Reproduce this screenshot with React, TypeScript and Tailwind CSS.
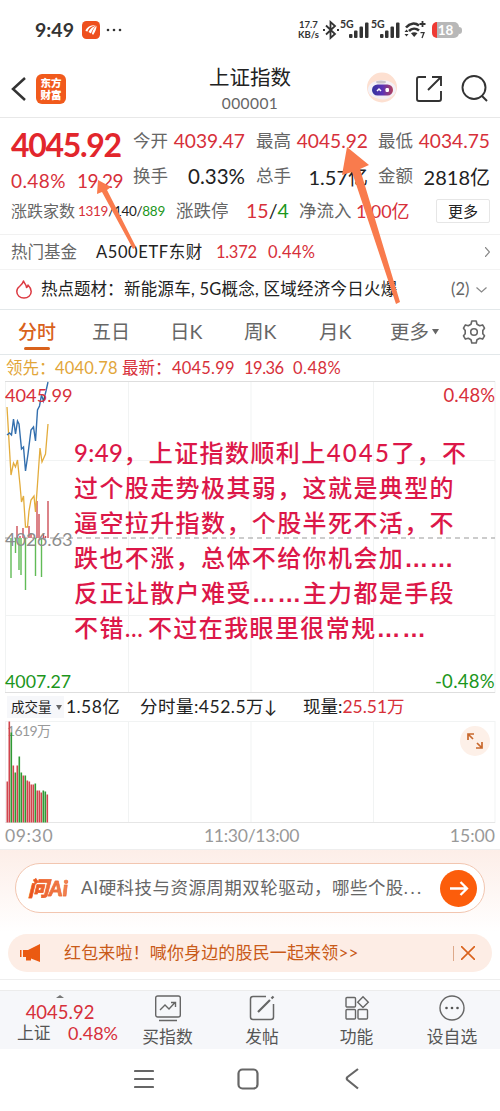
import type { ReactNode } from "react";

const FONT = "font-[Lato,'Noto_Sans_CJK_SC',sans-serif]";

type QuoteProps = {
  label: string;
  value: ReactNode;
  className?: string;
};

const Quote = ({ label, value, className = "text-[20px]" }: QuoteProps) => (
  <div className={`flex shrink-0 items-center justify-between ${className}`}>
    <span className="text-[17.5px] text-[#666]">{label}</span>
    <span>{value}</span>
  </div>
);

const StatusBar = () => (
  <div className="flex h-[60px] items-center pl-[35px] text-[#333]">
    <span className="w-[47px] text-[19.5px] font-bold">9:49</span>
    <svg width="18" height="18" viewBox="0 0 18 18">
      <rect width="18" height="18" rx="4.5" fill="#ee4f1d" />
      <path d="M3.500 10C4 6.500 9 3.500 14 4C9 5.500 6.500 7 5.500 10.500Z" fill="#fff" />
      <path d="M6.500 11C8 7.500 11 5.500 14.500 4.500C11.500 7 10 9 9 12.500Z" fill="#fff" />
      <path d="M10 12.500C11 8.500 12.500 6.500 14.700 5C14 9 13 11.500 11 14Z" fill="#fff" />
    </svg>
    <svg width="16" height="4" viewBox="0 0 16 4" className="ml-[6px]" fill="#333">
      <circle cx="2" cy="2" r="1.3" />
      <circle cx="8" cy="2" r="1.3" />
      <circle cx="14" cy="2" r="1.3" />
    </svg>
    <div className="ml-[175px] flex w-[23px] flex-col items-center text-[9.5px] leading-[10.5px] font-bold whitespace-nowrap">
      <span>17.7</span>
      <span>KB/s</span>
    </div>
    <svg width="18" height="20" viewBox="0 0 18 20" className="ml-[2px]" fill="none" stroke="#333" strokeWidth="1.8">
      <path d="M4 5.5L13 14L8.5 18V2L13 6L4 14.5" />
      <path d="M1 10H3M15 10H17" strokeWidth="2.2" />
    </svg>
    <Signal />
    <Signal />
    <svg width="24" height="20" viewBox="0 0 24 20" className="ml-[1px]" fill="none" stroke="#333" strokeWidth="2.6">
      <path d="M3 7.5C7 3 12 2.5 16 5.5" />
      <path d="M6 11C9 8 13 8 16 10.5" />
      <path d="M8 13.2C10 11.8 12.5 11.8 14.5 13.2L11.2 17Z" fill="#333" stroke="none" />
      <path d="M19.5 1V7M16.5 4H22.5" strokeWidth="1.8" />
      <path d="M1.5 12L3.5 9.5L5.5 12ZM1.5 14L3.5 16.5L5.5 14Z" fill="#333" stroke="none" />
      <path d="M17.5 12.7H21L19 18" strokeWidth="1.3" />
    </svg>
    <div className="ml-[5px] flex h-[16px] w-[27px] items-center justify-center rounded-[5px] bg-[linear-gradient(90deg,#ee3a34_0,#ee3a34_5px,#b8b8b8_5px)] text-[13.5px] font-bold text-white">
      18
    </div>
    <div className="h-[7px] w-[3px] rounded-r-full bg-[#b8b8b8]" />
  </div>
);

const Signal = () => (
  <div className="relative h-[20px] w-[31px]">
    <span className="absolute -top-px left-0 text-[10.5px] leading-[10px] font-bold">5G</span>
    <svg width="31" height="20" viewBox="0 0 31 20" fill="#333">
      <rect x="9" y="14" width="3.5" height="4" rx="1" />
      <rect x="14" y="10.5" width="3.5" height="7.5" rx="1" />
      <rect x="19.5" y="6.5" width="3.5" height="11.5" rx="1" />
      <rect x="25" y="2.5" width="3.5" height="15.5" rx="1" />
    </svg>
  </div>
);

const Header = () => (
  <header className="flex h-[58px] items-center border-b border-[#e8e8e8] pl-[11px]">
    <svg width="16" height="24" viewBox="0 0 16 24" fill="none" stroke="#333" strokeWidth="2.5">
      <path d="M14 1L2 12L14 23" />
    </svg>
    <div className="ml-[9px] flex h-[30px] w-[30px] flex-col items-center justify-center rounded-[6px] bg-[#f15a1c] text-[10.5px] leading-[12px] font-black text-white">
      <span>东方</span>
      <span>财富</span>
    </div>
    <div className="ml-[128px] flex w-[112px] flex-col items-center">
      <h1 className="text-[20.5px] leading-[27px] text-[#222]">上证指数</h1>
      <span className="mt-[1px] text-[15.5px] leading-[22px] tracking-[0.4px] text-[#666]">000001</span>
    </div>
    <svg width="34" height="34" viewBox="0 0 34 34" className="ml-[60px]">
      <defs>
        <linearGradient id="visor" x1="0" x2="1">
          <stop offset="0" stopColor="#33339c" />
          <stop offset=".5" stopColor="#5b33b5" />
          <stop offset="1" stopColor="#b3405d" />
        </linearGradient>
      </defs>
      <circle cx="16" cy="15.5" r="15" fill="#fde0d1" />
      <ellipse cx="16" cy="17.5" rx="14" ry="9.5" fill="#f3f1f7" />
      <ellipse cx="15" cy="10" rx="5" ry="1.5" fill="#c9c4cb" />
      <path d="M7 23Q17 32 27 23Z" fill="#f3edf2" />
      <rect x="6" y="12.5" width="21" height="11" rx="5.5" fill="url(#visor)" />
      <path d="M11 19L13 17L15 19" fill="none" stroke="#fff" strokeWidth="1.5" />
      <rect x="19.5" y="16" width="3.5" height="4" rx="1.2" fill="#fff" />
    </svg>
    <svg width="26" height="26" viewBox="0 0 26 26" className="ml-[16px]" fill="none" stroke="#333" strokeWidth="1.9">
      <path d="M10 1H3Q1 1 1 3V23Q1 25 3 25H23Q25 25 25 23V15" />
      <path d="M16 1H25V10M25 1L12 14" />
    </svg>
    <svg width="27" height="27" viewBox="0 0 27 27" className="ml-[19px]" fill="none" stroke="#333" strokeWidth="1.9">
      <circle cx="13" cy="12.5" r="11.5" />
      <path d="M20.5 20.5L26 26" />
    </svg>
  </header>
);

const Summary = () => (
  <section className="h-[117px] border-b border-[#f1f1f1] pt-[5px] pl-[11px] whitespace-nowrap text-[#222]">
    <div className="flex h-[36px] items-center">
      <span className="mt-[8px] w-[122px] shrink-0 text-[32px] leading-[36px] font-bold tracking-[-1.3px] text-[#e2262c]">
        4045.92
      </span>
      <Quote label="今开" value="4039.47" className="w-[112px] text-[19.2px] text-[#d7303a]" />
      <Quote label="最高" value="4045.92" className="ml-[11px] w-[112px] text-[19.2px] text-[#d7303a]" />
      <Quote label="最低" value="4034.75" className="ml-[10px] w-[112px] text-[19.2px] text-[#d7303a]" />
    </div>
    <div className="flex h-[35px] items-center">
      <div className="mt-[10px] flex w-[112px] shrink-0 justify-between text-[19px] text-[#d7303a]">
        <span className="tracking-[0.4px]">0.48%</span>
        <span className="tracking-[-0.5px]">19.29</span>
      </div>
      <Quote label="换手" value="0.33%" className="ml-[10px] w-[112px] text-[20.5px]" />
      <Quote label="总手" value="1.57亿" className="ml-[11px] w-[112px] text-[20px]" />
      <Quote label="金额" value="2818亿" className="ml-[10px] w-[112px] text-[20px]" />
    </div>
    <div className="flex h-[34px] items-center">
      <span className="w-[67px] text-[16px] text-[#666]">涨跌家数</span>
      <span className="w-[98px] text-[13.5px] tracking-[-0.3px]">
        <span className="text-[#d7303a]">1319</span>/140/<span className="text-[#1c961c]">889</span>
      </span>
      <span className="w-[70px] text-[17.5px] text-[#666]">涨跌停</span>
      <span className="w-[53px] text-[19.5px]">
        <span className="text-[#d7303a]">15</span>/<span className="text-[#1c961c]">4</span>
      </span>
      <span className="w-[57px] text-[17.5px] text-[#666]">净流入</span>
      <span className="w-[80px] text-[18px] text-[#d7303a]">1.00亿</span>
      <button className="h-[24px] w-[54px] rounded-[2px] border border-[#e6e6e6] text-[15px]">更多</button>
    </div>
  </section>
);

const Tabs = () => (
  <nav className="flex h-[45px] items-center border-b border-[#e3e8ea] pl-[18px] text-[19.5px] whitespace-nowrap text-[#666]">
    <span className="relative w-[74px] text-[19px] font-medium text-[#d9621c]">
      分时
      <i className="absolute -bottom-[4px] left-[6px] h-[3px] w-[26px] rounded-full bg-[#d9621c]" />
    </span>
    <span className="w-[78px] text-[19px]">五日</span>
    <span className="w-[74px]">日K</span>
    <span className="w-[75px]">周K</span>
    <span className="w-[71px]">月K</span>
    <span className="w-[42px]">更多</span>
    <svg width="7" height="6" viewBox="0 0 7 6" fill="#666">
      <path d="M0 0H7L3.5 5.5Z" />
    </svg>
    <svg width="24" height="24" viewBox="0 0 24 24" className="ml-[23px]" fill="none" stroke="#666" strokeWidth="1.6" strokeLinejoin="round">
      <path d="M9.8 1H14.2L15 4.3L17.7 5.8L20.6 4.9L22.5 8.2L20.8 10.5V13.8L22.5 15.8L20.6 19.1L17.7 18.2L15 19.7L14.2 23H9.8L9 19.7L6.3 18.2L3.4 19.1L1.5 15.8L3.2 13.8V10.5L1.5 8.2L3.4 4.9L6.3 5.8L9 4.3Z" />
      <circle cx="12" cy="12" r="3.3" />
    </svg>
  </nav>
);

const UP = [
  [17, 145], [20, 155], [23, 147], [29, 145], [31, 152], [37, 120],
  [39, 133], [43.5, 152], [45.5, 155], [48, 120],
];
const DOWN = [
  [11, 197], [15.5, 172], [19, 189], [21, 194], [25.5, 209], [35.5, 195], [41.5, 196],
];

const PriceChart = () => (
  <div className="relative h-[312px]">
    <svg width="500" height="312" viewBox="0 0 500 312" fill="none">
      <path d="M5.5 0V312M128.5 0V312M251 0V312M373.5 0V312M495 0V312M5 79.5H495M5 234.5H495" stroke="#f1f3f3" />
      <path d="M5 .5H495M5 311.5H495" stroke="#dedede" />
      <path d="M5 157H495" stroke="#999" strokeDasharray="5 4" />
      {UP.map(([x, y]) => (
        <path key={x} d={`M${x} ${y}V157`} stroke="#cd4f57" strokeWidth="1.4" />
      ))}
      {DOWN.map(([x, y]) => (
        <path key={x} d={`M${x} 157V${y}`} stroke="#61bb56" strokeWidth="1.4" />
      ))}
      <path
        d="M7 26L11 94L13.5 82L15.5 86L17.5 79L20 104L21.5 121L23.5 115L25.5 146H27.5L29 130L31 119L34 115L35.5 131L37.5 103L40 67L42 81L45.5 73L48 43"
        stroke="#e3ac3c"
        strokeWidth="1.3"
      />
      <path
        d="M7 54L9.5 52L11.5 54L13.5 38L15.5 53L17.5 40L19 43L21.5 68L23.5 66L25.5 90L28 73L31 49L33.5 46L35.5 60L37.5 29L39.5 25L41.5 14L43.5 20L46 10L48 1"
        stroke="#336fae"
        strokeWidth="1.4"
      />
    </svg>
    <span className="absolute top-[2px] left-[5px] text-[18.2px] leading-[24px] text-[#d7303a]">4045.99</span>
    <span className="absolute top-[2px] right-[5px] text-[18.5px] leading-[24px] text-[#d7303a]">0.48%</span>
    <span className="absolute top-[146px] left-[5px] text-[18.2px] leading-[24px] text-[#8d8d8d]">4026.63</span>
    <span className="absolute bottom-0 left-[5px] text-[17.8px] leading-[24px] text-[#1c961c]">4007.27</span>
    <span className="absolute right-[5px] bottom-0 text-[18.5px] leading-[24px] tracking-[0.3px] text-[#1c961c]">-0.48%</span>
    <p className="absolute top-[54px] left-[74px] text-[24px] leading-[35px] font-medium tracking-[1.4px] whitespace-nowrap text-[#dc1748]">
      <span className="tracking-[0.4px]">9:49</span>，上证指数顺利上<span className="tracking-[2.2px]">4045</span>了，不
      <br />
      过个股走势极其弱，这就是典型的
      <br />
      逼空拉升指数，个股半死不活，不
      <br />
      跌也不涨，总体不给你机会加<Ellipsis />
      <br />
      反正让散户难受<Ellipsis />主力都是手段
      <br />
      不错<span className="tracking-[5px]">…</span>不过在我眼里很常规<Ellipsis />
    </p>
  </div>
);

const Ellipsis = () => (
  <span className="font-['Liberation_Sans',sans-serif] leading-none font-bold">……</span>
);

const VOLUMES: [number, boolean][] = [
  [41, true], [101, true], [90, false], [57, true], [50, false], [57, true], [66, false],
  [50, false], [47, true], [47, false], [42, true], [41, true], [38, true], [38, true],
  [39, false], [32, true], [32, true], [30, true], [32, false], [31, false], [28, true],
];

const VolumeChart = () => (
  <div className="relative h-[102px]">
    <span className="absolute top-[1px] left-[7px] text-[14px] leading-[18px] tracking-[-0.6px] text-[#999]">1619万</span>
    <svg width="500" height="102" viewBox="0 0 500 102" fill="none" className="relative">
      <path d="M5.5 0V102M128.5 0V102M251 0V102M373.5 0V102M495 0V102M5 .5H495" stroke="#f1f3f3" />
      <path d="M5 101.5H495" stroke="#e6e6e6" />
      {VOLUMES.map(([h, up], i) => (
        <rect key={i} x={6.5 + i * 2} y={101.5 - h} width="1.6" height={h} fill={up ? "#d0454d" : "#2f9a35"} />
      ))}
    </svg>
    <svg width="30" height="30" viewBox="0 0 30 30" className="absolute top-[5px] right-[10px]" fill="none" stroke="#c8682c" strokeWidth="1.7">
      <circle cx="15" cy="15" r="15" fill="#fdf0e8" stroke="none" />
      <path d="M8 14V8H14M8 8L13 13M22 16V22H16M22 22L17 17" />
    </svg>
  </div>
);

const Banner = () => (
  <section className="h-[131px] border-y border-[#eee] bg-[linear-gradient(180deg,#fdeee8_0,#fff_82px)] pt-[13px]">
    <div className="ml-[15px] flex h-[50px] w-[470px] items-center rounded-full border border-[#f2c6b0] bg-white pl-[12px]">
      <span className="w-[53px] bg-linear-to-r from-[#ea4f13] to-[#f29665] bg-clip-text text-[20.5px] font-black tracking-[0.4px] text-transparent italic [-webkit-text-stroke:0.5px_#ee6428]">
        问Ai
      </span>
      <span className="w-[359px] text-[17.5px] tracking-[0.45px] whitespace-nowrap text-[#666]">
        AI硬科技与资源周期双轮驱动，哪些个股<span className="tracking-[2.5px]">...</span>
      </span>
      <svg width="37" height="37" viewBox="0 0 37 37" fill="none" stroke="#fff" strokeWidth="2.3">
        <circle cx="18.5" cy="18.5" r="18.5" fill="#fc5d0b" stroke="none" />
        <path d="M10 18.5H27M20.5 12L27 18.5L20.5 25" />
      </svg>
    </div>
    <div className="mt-[21px] ml-[8px] flex h-[38px] w-[484px] items-center rounded-full bg-[#fdede5] pl-[12px]">
      <svg width="21" height="18" viewBox="0 0 21 18" fill="#ea5a12">
        <path d="M0 6H1.5V13H0ZM3 6H8L20 0V18L11 14.5V16.5H6V13H3Z" />
      </svg>
      <span className="ml-[23px] w-[389px] text-[17px] tracking-[0.15px] text-[#c95a18]">
        红包来啦！喊你身边的股民一起来领&gt;&gt;
      </span>
      <i className="h-[15px] w-px bg-[#dda98a]" />
      <svg width="14" height="14" viewBox="0 0 14 14" className="ml-[7px]" stroke="#d9621c" strokeWidth="1.6">
        <path d="M0 0L14 14M14 0L0 14" />
      </svg>
    </div>
  </section>
);

const BottomBar = () => (
  <nav className="mt-[10px] flex h-[59px] border-t border-[#ececec] bg-[#f6f7fa] text-[16.8px] whitespace-nowrap text-[#555]">
    <div className="flex w-[120px] flex-col items-center pt-[4px]">
      <svg width="8" height="3" viewBox="0 0 8 3" fill="#777">
        <path d="M0 3L4 0L8 3Z" />
      </svg>
      <span className="mt-[3px] text-[18.5px] leading-[22px] text-[#d7303a]">4045.92</span>
      <div className="flex h-[22px] w-full justify-between pr-[2px] pl-[17px] leading-[20px]">
        <span>上证</span>
        <span className="text-[18px] text-[#d7303a]">0.48%</span>
      </div>
    </div>
    <div className="flex w-[95px] flex-col items-center pt-[4px]">
      <svg width="26" height="28" viewBox="0 0 26 28" fill="none" stroke="#666" strokeWidth="1.4">
        <rect x=".7" y="1" width="24.6" height="21" rx="2" />
        <path d="M5 15L10 10L14 14L20 7.5M16 7.5H20.5V12M4 25.5H22" />
      </svg>
      <span className="mt-[3px] leading-[22px]">买指数</span>
    </div>
    <div className="flex w-[94px] flex-col items-center pt-[4px]">
      <svg width="26" height="28" viewBox="0 0 26 28" fill="none" stroke="#666" strokeWidth="1.5">
        <path d="M17 1.5H4Q1.5 1.5 1.5 4V22Q1.5 24.5 4 24.5H22Q24.5 24.5 24.5 22V9" />
        <path d="M9 17L21 5M22.5 3.5L24.5 1.5" strokeWidth="2.2" />
      </svg>
      <span className="mt-[3px] leading-[22px]">发帖</span>
    </div>
    <div className="flex w-[95px] flex-col items-center pt-[4px]">
      <svg width="26" height="28" viewBox="0 0 26 28" fill="none" stroke="#666" strokeWidth="1.4">
        <rect x="2" y="2.5" width="9.5" height="9.5" rx="1" />
        <rect x="2" y="14.5" width="9.5" height="9.5" rx="1" />
        <rect x="14" y="14.5" width="9.5" height="9.5" rx="1" />
        <path d="M19 1.8L24.3 7.2L19 12.5L13.7 7.2Z" />
      </svg>
      <span className="mt-[3px] leading-[22px]">功能</span>
    </div>
    <div className="flex w-[96px] flex-col items-center pt-[4px]">
      <svg width="26" height="28" viewBox="0 0 26 28" fill="none" stroke="#666" strokeWidth="1.4">
        <circle cx="13" cy="13" r="12" />
        <g fill="#555" stroke="none">
          <circle cx="7.5" cy="13" r="1.3" />
          <circle cx="13" cy="13" r="1.3" />
          <circle cx="18.5" cy="13" r="1.3" />
        </g>
      </svg>
      <span className="mt-[3px] leading-[22px]">设自选</span>
    </div>
  </nav>
);

const SystemNav = () => (
  <div className="flex h-[59px] items-center pl-[134px]">
    <svg width="20" height="20" viewBox="0 0 20 20" stroke="#666" strokeWidth="2.2" strokeLinecap="round">
      <path d="M1 2H19M1 10H19M1 18H19" />
    </svg>
    <svg width="22" height="22" viewBox="0 0 22 22" className="ml-[83px]" fill="none" stroke="#666" strokeWidth="2.2">
      <rect x="1.5" y="1.5" width="19" height="19" rx="4" />
    </svg>
    <svg width="14" height="22" viewBox="0 0 14 22" className="ml-[86px]" fill="none" stroke="#666" strokeWidth="2.2" strokeLinejoin="round">
      <path d="M13 1L2.5 9Q1 10.5 2.5 12L13 20.5" />
    </svg>
  </div>
);

export default function App() {
  return (
    <main className={`relative h-[1111px] w-[500px] overflow-hidden bg-white ${FONT}`}>
      <StatusBar />
      <Header />
      <Summary />

      <div className="flex h-[35px] items-center border-b border-[#f3f3f3] pl-[11px] text-[16.5px] whitespace-nowrap text-[#222]">
        <span className="w-[85px] text-[#666]">热门基金</span>
        <span className="w-[120px] tracking-[0.6px]">A500ETF东财</span>
        <span className="w-[52px] tracking-[-0.3px] text-[#d7303a]">1.372</span>
        <span className="w-[217px] tracking-[0.3px] text-[#d7303a]">0.44%</span>
        <svg width="5" height="10" viewBox="0 0 5 10" fill="none" stroke="#888" strokeWidth="1.2">
          <path d="M0 0L4.5 5L0 10" />
        </svg>
      </div>

      <div className="flex h-[40px] items-center border-b border-[#e3e8ea] pl-[16px] text-[16.5px] whitespace-nowrap text-[#222]">
        <svg width="16" height="19" viewBox="0 0 16 19" fill="none" stroke="#dc3a42" strokeWidth="1.5" strokeLinejoin="round">
          <path d="M7.5 1C8.5 4 10.5 4.5 10.5 7.5C11.5 7 12 6 12 5C14 7 15.2 9 15.2 11.5C15.2 15.5 12 18 8 18S.8 15.5 .8 11.5C.8 9 2 7.5 3.5 6.5C5.2 5.2 6.8 3.5 7.5 1Z" />
        </svg>
        <span className="ml-[9px] w-[83px]">热点题材：</span>
        <span className="w-[327px] tracking-[0.25px]">新能源车, 5G概念, 区域经济今日火爆</span>
        <span className="w-[25px] text-[#666]">(2)</span>
        <svg width="11" height="6" viewBox="0 0 11 6" fill="none" stroke="#888" strokeWidth="1.2">
          <path d="M.5 .5L5.5 5L10.5 .5" />
        </svg>
      </div>

      <Tabs />

      <div className="flex h-[26px] items-center pl-[6px] text-[16.5px] whitespace-nowrap text-[#d7303a]">
        <span className="w-[49px] text-[#e2a63a]">领先：</span>
        <span className="w-[67px] tracking-[0.2px] text-[#e2a63a]">4040.78</span>
        <span className="w-[50px]">最新：</span>
        <span className="w-[72px] tracking-[0.2px]">4045.99</span>
        <span className="w-[49px] tracking-[-0.5px]">19.36</span>
        <span className="tracking-[0.5px]">0.48%</span>
      </div>

      <PriceChart />

      <div className="flex h-[28px] items-center pl-[7px] text-[17.5px] whitespace-nowrap text-[#222]">
        <div className="flex h-[22px] w-[57px] items-center bg-[#f6f7fa] pl-[4px] text-[13.5px]">
          成交量
          <svg width="6" height="5" viewBox="0 0 6 5" fill="#666" className="ml-[4px]">
            <path d="M0 0H6L3 5Z" />
          </svg>
        </div>
        <span className="ml-[2px] w-[74px] tracking-[0.4px]">1.58亿</span>
        <span className="w-[163px] tracking-[0.5px]">分时量:452.5万↓</span>
        <span>
          现量:<span className="text-[#d7303a]">25.51万</span>
        </span>
      </div>

      <VolumeChart />

      <div className="flex h-[26px] items-center justify-between px-[5px] text-[17.6px] text-[#999]">
        <span className="tracking-[0.6px]">09:30</span>
        <span className="tracking-[-0.3px]">11:30/13:00</span>
        <span>15:00</span>
      </div>

      <Banner />
      <BottomBar />
      <SystemNav />

      <svg width="500" height="320" viewBox="0 0 500 320" className="pointer-events-none absolute top-0 left-0" fill="#f97b4d">
        <path d="M98 180L111 187L107 190L136 247L133 249L102 192L97 194Z" />
        <path d="M347 147L369 165L360 169L400 302L396 304L352 172L342 175Z" />
      </svg>
    </main>
  );
}
